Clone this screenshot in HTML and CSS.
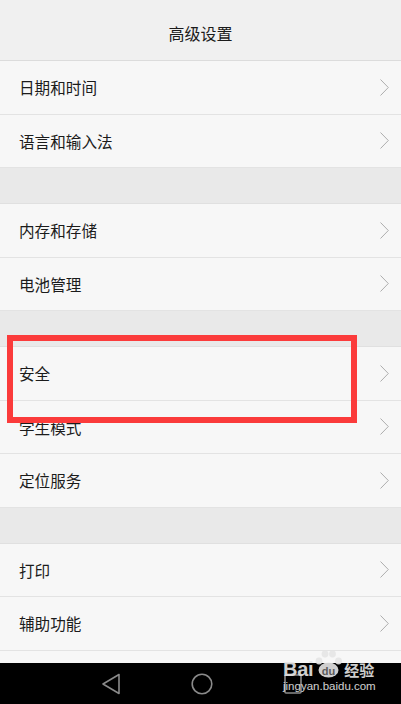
FILE: index.html
```html
<!DOCTYPE html>
<html lang="zh-CN">
<head>
  <meta charset="UTF-8">
  <meta name="viewport" content="width=device-width, initial-scale=1.0">
  <title>高级设置</title>
  <link rel="stylesheet" href="styles.css">
</head>
<body>
  <div class="screen">
    <div class="title-bar">高级设置</div>

    <div class="row"><span>日期和时间</span><svg class="chevron" width="9" height="17" viewBox="0 0 9 17"><polyline points="0.5,0.5 8.3,8.5 0.5,16.5" fill="none" stroke="#adadad" stroke-width="1"/></svg></div>
    <div class="row"><span>语言和输入法</span><svg class="chevron" width="9" height="17" viewBox="0 0 9 17"><polyline points="0.5,0.5 8.3,8.5 0.5,16.5" fill="none" stroke="#adadad" stroke-width="1"/></svg></div>
    <div class="gap"></div>

    <div class="row"><span>内存和存储</span><svg class="chevron" width="9" height="17" viewBox="0 0 9 17"><polyline points="0.5,0.5 8.3,8.5 0.5,16.5" fill="none" stroke="#adadad" stroke-width="1"/></svg></div>
    <div class="row"><span>电池管理</span><svg class="chevron" width="9" height="17" viewBox="0 0 9 17"><polyline points="0.5,0.5 8.3,8.5 0.5,16.5" fill="none" stroke="#adadad" stroke-width="1"/></svg></div>
    <div class="gap"></div>

    <div class="row"><span>安全</span><svg class="chevron" width="9" height="17" viewBox="0 0 9 17"><polyline points="0.5,0.5 8.3,8.5 0.5,16.5" fill="none" stroke="#adadad" stroke-width="1"/></svg></div>
    <div class="row"><span>学生模式</span><svg class="chevron" width="9" height="17" viewBox="0 0 9 17"><polyline points="0.5,0.5 8.3,8.5 0.5,16.5" fill="none" stroke="#adadad" stroke-width="1"/></svg></div>
    <div class="row"><span>定位服务</span><svg class="chevron" width="9" height="17" viewBox="0 0 9 17"><polyline points="0.5,0.5 8.3,8.5 0.5,16.5" fill="none" stroke="#adadad" stroke-width="1"/></svg></div>
    <div class="gap"></div>

    <div class="row"><span>打印</span><svg class="chevron" width="9" height="17" viewBox="0 0 9 17"><polyline points="0.5,0.5 8.3,8.5 0.5,16.5" fill="none" stroke="#adadad" stroke-width="1"/></svg></div>
    <div class="row"><span>辅助功能</span><svg class="chevron" width="9" height="17" viewBox="0 0 9 17"><polyline points="0.5,0.5 8.3,8.5 0.5,16.5" fill="none" stroke="#adadad" stroke-width="1"/></svg></div>
    <div class="row"></div>

    <!-- annotation box drawn over the screenshot -->
    <div class="mark"></div>

    <div class="nav-bar">
      <svg class="nav-icon" width="24" height="24" viewBox="0 0 24 24">
        <path d="M20 2.5 L20 21.5 L4 12 Z" fill="none" stroke="#8a8a8a" stroke-width="1.6" stroke-linejoin="round"/>
      </svg>
      <svg class="nav-icon" width="24" height="24" viewBox="0 0 24 24">
        <circle cx="12" cy="12" r="9.8" fill="none" stroke="#8a8a8a" stroke-width="1.6"/>
      </svg>
      <svg class="nav-icon" width="24" height="24" viewBox="0 0 24 24">
        <rect x="4" y="3" width="16" height="18" rx="1" fill="none" stroke="#8a8a8a" stroke-width="1.6"/>
      </svg>
    </div>

    <div class="watermark">
      <div class="wm-top">
        <span class="wm-bai">Bai</span>
        <svg class="wm-paw" width="29" height="28" viewBox="0 0 29 28">
          <circle cx="5" cy="11" r="3.4" fill="#e6e6e6"/>
          <circle cx="11" cy="4" r="3.4" fill="#e6e6e6"/>
          <circle cx="18.5" cy="4" r="3.4" fill="#e6e6e6"/>
          <circle cx="24.5" cy="11" r="3.4" fill="#e6e6e6"/>
          <ellipse cx="14.5" cy="20" rx="10" ry="7.5" fill="#e6e6e6"/>
          <text x="14.5" y="25" text-anchor="middle" font-size="11" font-family="Liberation Sans, sans-serif" font-weight="bold" fill="#666">du</text>
        </svg>
        <span class="wm-jy">经验</span>
      </div>
      <div class="wm-url">jingyan.baidu.com</div>
    </div>
  </div>
</body>
</html>
```

FILE: styles.css
```css
body {
  margin: 0;
  padding: 0;
  font-family: "Noto Sans CJK SC", "Noto Sans", sans-serif;
  background-color: #f7f7f7;
}

.screen {
  position: relative;
  width: 401px;
  height: 704px;
  overflow: hidden;
  background-color: #f7f7f7;
}

.title-bar {
  height: 54px;
  padding-top: 6px;
  border-bottom: 1px solid #dcdcdc;
  background-color: #f0f0f0;
  display: flex;
  align-items: center;
  justify-content: center;
  font-size: 16px;
  color: #1b1b1b;
}

.row {
  height: 53.5px;
  box-sizing: border-box;
  border-bottom: 1px solid #e3e3e3;
  display: flex;
  align-items: center;
  justify-content: space-between;
  padding: 0 12px 0 19px;
  font-size: 15.6px;
  color: #1b1b1b;
}

.chevron {
  display: block;
}

.gap {
  height: 36px;
  box-sizing: border-box;
  border-bottom: 1px solid #e0e0e0;
  background-color: #e9e9e9;
}

.mark {
  position: absolute;
  left: 7px;
  top: 335px;
  width: 338px;
  height: 76px;
  border: 6px solid #fb3b3b;
}

.nav-bar {
  position: absolute;
  left: 0;
  bottom: 0;
  width: 100%;
  height: 41px;
  background-color: #000;
  display: flex;
  align-items: center;
  justify-content: center;
  gap: 67px;
  padding-left: 3px;
  box-sizing: border-box;
}

.watermark {
  position: absolute;
  left: 283px;
  top: 650px;
  color: #e6e6e6;
  opacity: 0.9;
  font-family: "Liberation Sans", sans-serif;
}

.wm-top {
  display: flex;
  align-items: flex-end;
  height: 28px;
}

.wm-bai {
  font-size: 20px;
  line-height: 20px;
  font-weight: bold;
  letter-spacing: -0.3px;
  margin-bottom: -1px;
}

.wm-paw {
  display: block;
  margin-left: 1px;
}

.wm-jy {
  font-family: "Noto Sans CJK SC", sans-serif;
  font-size: 15px;
  line-height: 17px;
  font-weight: bold;
  margin-left: 1px;
  margin-bottom: 0;
}

.wm-url {
  font-size: 11.5px;
  line-height: 13px;
  margin-top: 2px;
}
```
